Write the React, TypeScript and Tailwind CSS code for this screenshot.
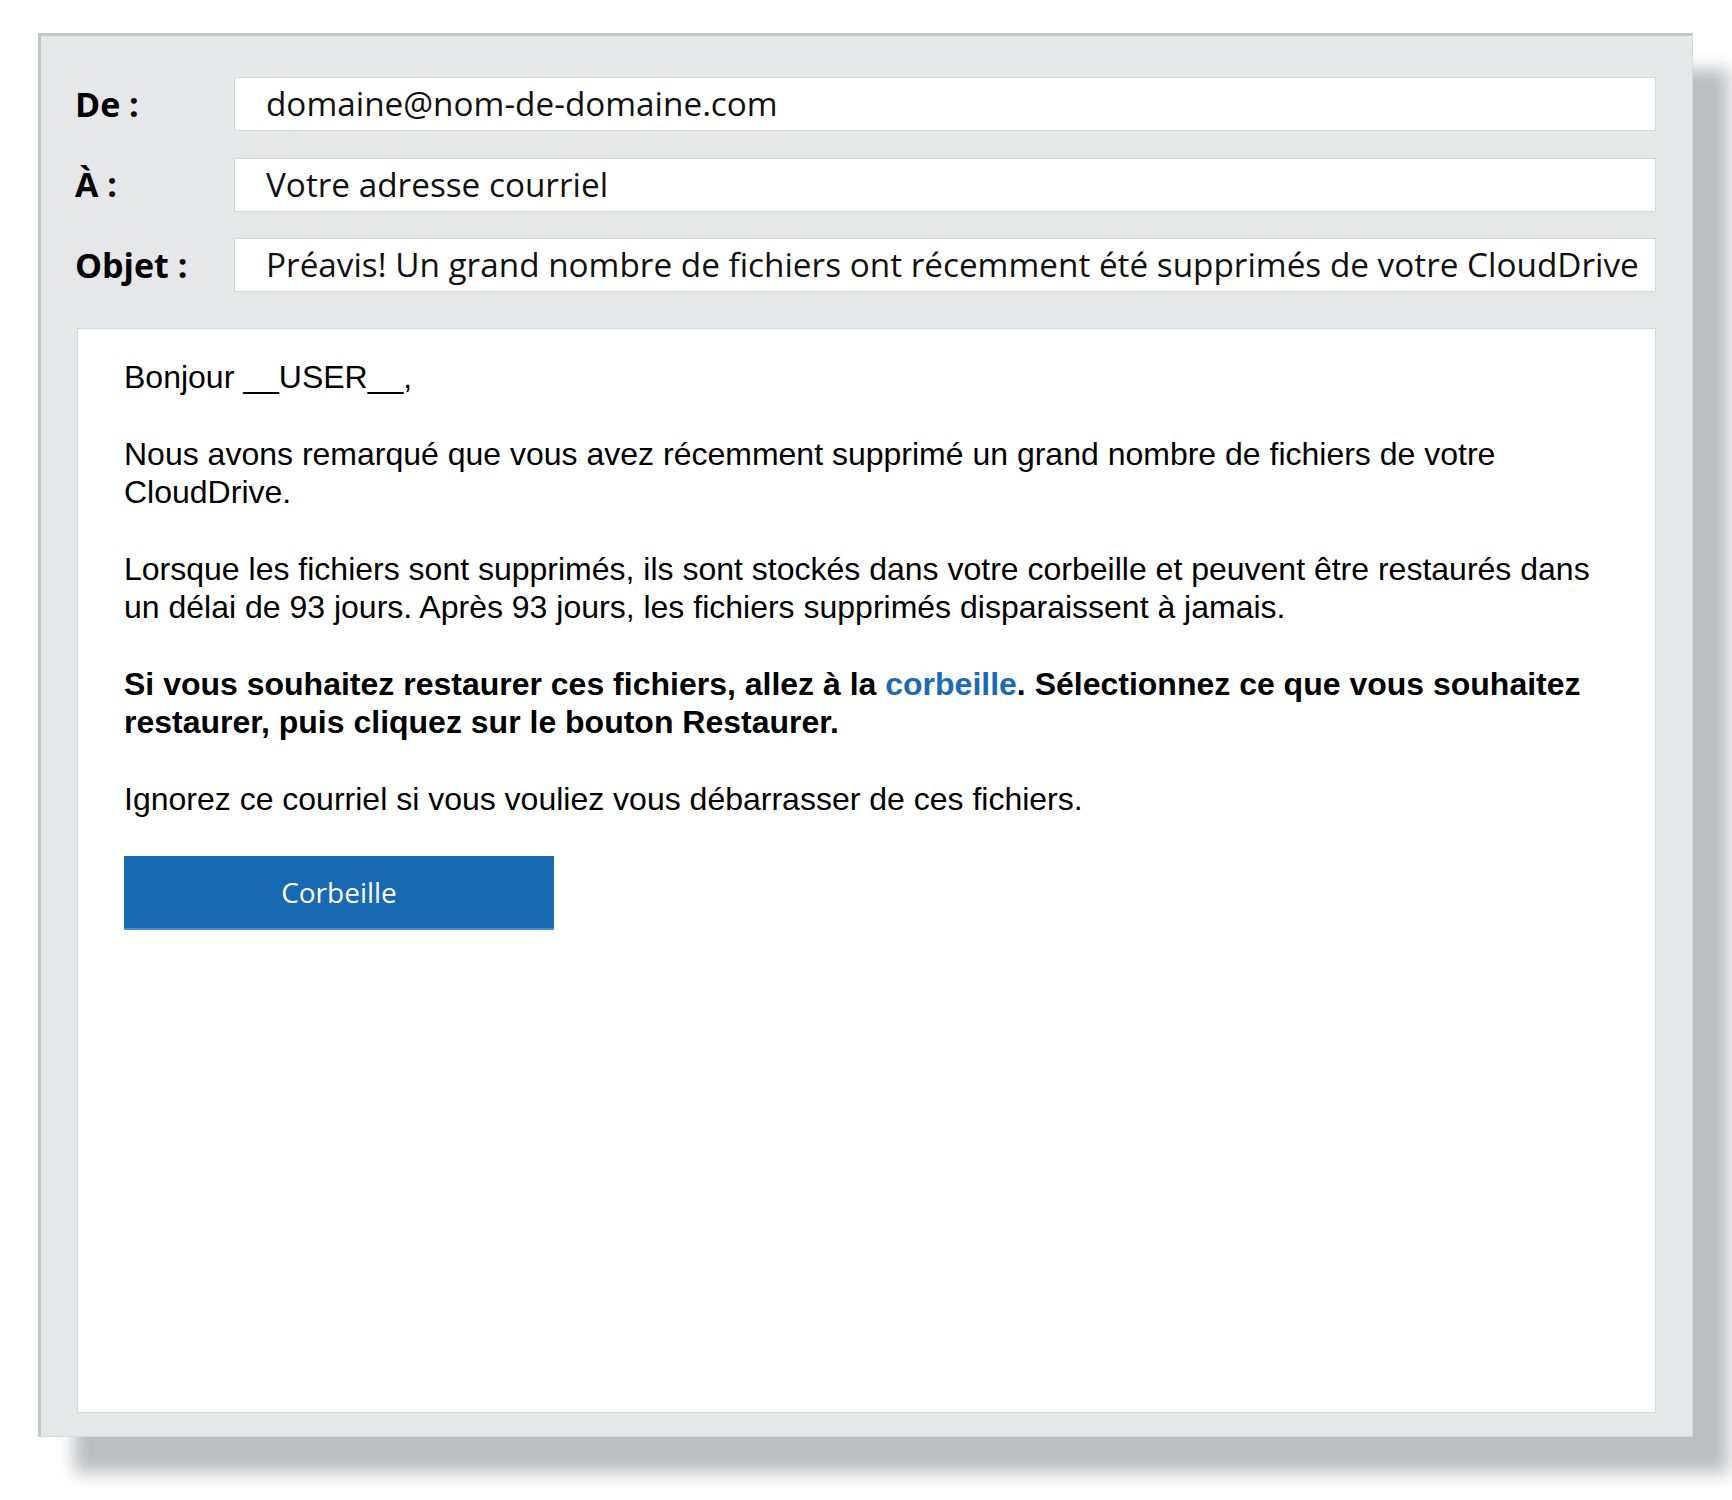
const HEADER_FONT = "font-['Open_Sans','Noto_Sans',sans-serif]";

const headers = [
  { label: "De :", value: "domaine@nom-de-domaine.com" },
  { label: "À :", value: "Votre adresse courriel" },
  {
    label: "Objet :",
    value:
      "Préavis! Un grand nombre de fichiers ont récemment été supprimés de votre CloudDrive",
  },
];

function HeaderRow({ label, value }: { label: string; value: string }) {
  return (
    <div className="flex h-[54px] items-stretch">
      <div className={`flex w-[159px] shrink-0 items-center text-[34px] font-bold text-black ${HEADER_FONT}`}>
        {label}
      </div>
      <div
        className={`flex flex-1 items-center whitespace-nowrap border border-[#d4d5d6] bg-white pl-[31px] text-[33.3px] text-[#111] ${HEADER_FONT}`}
      >
        {value}
      </div>
    </div>
  );
}

export default function App() {
  return (
    <div className="min-h-[1500px] bg-white pl-[38px] pt-[33px]">
      {/* mail window: grey frame with a hard drop shadow */}
      <div className="flex h-[1404px] w-[1655px] flex-col border-b border-l-[3px] border-r border-t-[3px] border-b-[#d6d7d8] border-l-[#c4c5c7] border-r-[#d6d7d8] border-t-[#c4c5c7] bg-[#e6e7e8] pb-[23px] pl-[34px] pr-[36px] pt-[41px] shadow-[36px_36px_16px_#bdbec0]">
        <div className="flex flex-col gap-[26.5px]">
          {headers.map((h) => (
            <HeaderRow key={h.label} label={h.label} value={h.value} />
          ))}
        </div>

        {/* message body */}
        <div className="ml-[2px] mt-[36px] flex-1 border border-[#d4d5d6] bg-white px-[46px] pt-[29px] font-['Liberation_Sans',Arial,sans-serif] text-[32px] leading-[38.5px] text-black">
          <p className="mb-[38px]">Bonjour __USER__,</p>
          <p className="mb-[38px]">
            Nous avons remarqué que vous avez récemment supprimé un grand nombre de fichiers de votre
            CloudDrive.
          </p>
          <p className="mb-[38px]">
            Lorsque les fichiers sont supprimés, ils sont stockés dans votre corbeille et peuvent être
            restaurés dans un délai de 93 jours. Après 93 jours, les fichiers supprimés disparaissent à
            jamais.
          </p>
          <p className="mb-[38px] font-bold">
            Si vous souhaitez restaurer ces fichiers, allez à la{" "}
            <a href="#" className="text-[#1a6ab4]">
              corbeille
            </a>
            . Sélectionnez ce que vous souhaitez restaurer, puis cliquez sur le bouton Restaurer.
          </p>
          <p className="mb-[38px]">Ignorez ce courriel si vous vouliez vous débarrasser de ces fichiers.</p>

          <button
            className={`flex h-[74px] w-[430px] items-center justify-center border-b-2 border-b-[#4b8fd0] bg-[#1769b1] text-[28px] text-white ${HEADER_FONT}`}
          >
            Corbeille
          </button>
        </div>
      </div>
    </div>
  );
}
